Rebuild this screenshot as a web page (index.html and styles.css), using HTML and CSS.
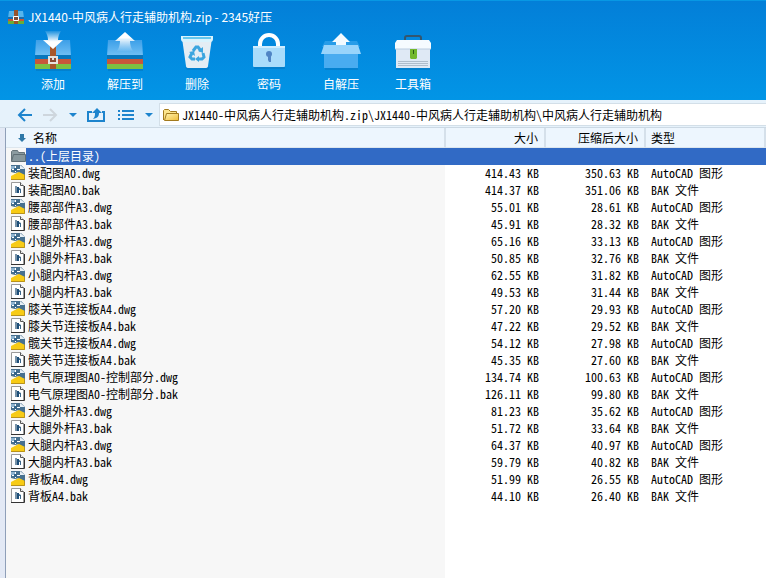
FILE: index.html
```
<!DOCTYPE html>
<html lang="zh-CN">
<head>
    <meta charset="UTF-8">
    <title>JX1440-中风病人行走辅助机构.zip - 2345好压</title>
    <link rel="stylesheet" href="styles.css">
</head>
<body>
    <!-- Shared icons -->
    <svg class="sprite" aria-hidden="true">
        <defs>
            <linearGradient id="box-blue" x1="0" y1="0" x2="0" y2="1">
                <stop offset="0" stop-color="#3c9fe8"/>
                <stop offset="1" stop-color="#72c0f5"/>
            </linearGradient>
            <linearGradient id="arrow-down" x1="0" y1="0" x2="0" y2="1">
                <stop offset="0" stop-color="#fff" stop-opacity="0.1"/>
                <stop offset="0.6" stop-color="#fff"/>
            </linearGradient>
            <linearGradient id="arrow-up" x1="0" y1="0" x2="0" y2="1">
                <stop offset="0.3" stop-color="#fff"/>
                <stop offset="1" stop-color="#fff" stop-opacity="0.05"/>
            </linearGradient>
            <linearGradient id="folder-yellow" x1="0" y1="0" x2="1" y2="1">
                <stop offset="0" stop-color="#fff3b0"/>
                <stop offset="1" stop-color="#f0bd38"/>
            </linearGradient>
        </defs>
        <symbol id="stripes" viewBox="0 0 40 42">
            <path d="M3 39h35v2H3z" fill="#0567a8" opacity="0.35"/>
            <path d="M3 10h34l1 16H2z" fill="url(#box-blue)"/>
            <path d="M2 25h36v4H2z" fill="#0876bd"/>
            <path d="M2 29h36v5H2z" fill="#c8573a"/>
            <path d="M2 34h36v5H2z" fill="#7cc142"/>
        </symbol>
        <symbol id="folder" viewBox="0 0 16 14">
            <path d="M.5 12V2.500l1-1h4l2 2h6v3" fill="#fbe48c" stroke="#a27a1d"/>
            <path d="M3.500 5.500h12v7h-14z" fill="url(#folder-yellow)" stroke="#a27a1d"/>
        </symbol>
        <symbol id="folder-up" viewBox="0 0 16 14">
            <path d="M.5 12V2.500l1-1h5l1 2h6v3" fill="#8b9ba0" stroke="#66757b"/>
            <path d="M2.500 5.500h12v7H.5z" fill="#87979c" stroke="#5f6e74"/>
        </symbol>
        <symbol id="dwg" viewBox="0 0 14 16">
            <path d="M0 0h10l4 4v11H0z" fill="#47708f"/>
            <path d="M0 1h4v3H0z" fill="#8fb4d0"/>
            <path d="M9 0v4h5z" fill="#e8f0f6"/>
            <path d="M4.500 1v6M1 4.500h8" stroke="#fff"/>
            <path d="M3 3h3v3H3z" fill="#34658a"/>
            <path d="M0 7l4 1 4-1-8 5z" fill="#fffbe6"/>
            <path d="M0 11L8 7l6 3v5H0z" fill="#f7cb15"/>
            <path d="M0 14.500h13.500V10" fill="none" stroke="#b8921c"/>
        </symbol>
        <symbol id="bak" viewBox="0 0 14 16">
            <path d="M.5 .5h9l3 3v11H.5z" fill="#fff" stroke="#9a9a9a"/>
            <path d="M9.500 .5v3h3" fill="#eee" stroke="#555"/>
            <path d="M13.500 4v10.500H0" fill="none" stroke="#333"/>
            <path d="M4 4h2v7H4z" fill="#7893a8"/>
            <path d="M6 5h2v6H6z" fill="#1d4e78"/>
            <path d="M8 6l2 1v4H9V8H8z" fill="#3d688b"/>
        </symbol>
    </svg>

    <header class="top">
        <h1 class="title">
            <svg class="logo" viewBox="0 0 16 14" aria-hidden="true">
                <path d="M1 1h14l1 7H0z" fill="#55b5ed"/>
                <path d="M0 7h16v2H0z" fill="#176eb0"/>
                <path d="M0 9h16v2H0z" fill="#c8573a"/>
                <path d="M0 11h16v3H0z" fill="#6aad36"/>
                <path d="M6 0h4v14H6z" fill="#97532c"/>
                <path d="M5.500 6.500h5v4h-5z" fill="#7c4b36" stroke="#fff"/>
            </svg>
            JX1440-中风病人行走辅助机构.zip - 2345好压
        </h1>
        <div class="toolbar">
            <button class="tool">
                <svg viewBox="0 0 40 42" aria-hidden="true">
                    <use href="#stripes"/>
                    <path d="M17 14h6v25h-6z" fill="#a9572b"/>
                    <path d="M16 27h8v6h-8z" fill="#8b4a34" stroke="#e8e2df" stroke-width="2"/>
                    <path d="M20 27v3" stroke="#e8e2df" stroke-width="2"/>
                    <path d="M12 1h16c-2 3-3 6-3 9h5L20 19 10 10h5c0-3-1-6-3-9z" fill="url(#arrow-down)"/>
                </svg>
                添加
            </button>
            <button class="tool">
                <svg viewBox="0 0 40 42" aria-hidden="true">
                    <use href="#stripes"/>
                    <path d="M20 2l10 9h-5c0 4 1 7 3 10H12c2-3 3-6 3-10h-5z" fill="url(#arrow-up)"/>
                </svg>
                解压到
            </button>
            <button class="tool">
                <svg viewBox="0 0 40 42" aria-hidden="true">
                    <path d="M8 37h25l-2 3H10z" fill="#0567a8" opacity="0.3"/>
                    <path d="M5 8h30l-4 28q0 2-3 2H12q-3 0-3-2z" fill="#e4edf4"/>
                    <path d="M4 6h32v3q0 3-3 3H7q-3 0-3-3z" fill="#d9f3fd"/>
                    <path d="M6 7h28v2H6z" fill="#65c8ef"/>
                    <g fill="none" stroke="#3ba5df" stroke-width="3">
                        <path d="M16 21l3-4h2l3 4"/>
                        <path d="M26 23l1 4-2 2h-4"/>
                        <path d="M18 29h-3l-2-2 2-4"/>
                    </g>
                    <path d="M26 17v6l-5-2zM22 26v6l-4-3zM12 22l5-1 1 5z" fill="#3ba5df"/>
                </svg>
                删除
            </button>
            <button class="tool">
                <svg viewBox="0 0 40 42" aria-hidden="true">
                    <path d="M5 37h31v2H5z" fill="#0567a8" opacity="0.35"/>
                    <path d="M11 18v-4a9 9 0 0 1 18 0v4" fill="none" stroke="#fff" stroke-width="4"/>
                    <rect x="4" y="16" width="32" height="21" rx="1" fill="#a9dcfb"/>
                    <path d="M4 16h32v2H4z" fill="#d0edff"/>
                    <circle cx="20" cy="24" r="3" fill="#5085c5"/>
                    <path d="M19 25h3v7h-2l-1-2z" fill="#5085c5"/>
                </svg>
                密码
            </button>
            <button class="tool">
                <svg viewBox="0 0 40 42" aria-hidden="true">
                    <path d="M4 38h33v2H4z" fill="#0567a8" opacity="0.3"/>
                    <path d="M4 11h32l3 6H1z" fill="#279ce8"/>
                    <path d="M20 3l9 9h-4v6H15v-6h-4z" fill="#f2faff"/>
                    <path d="M3 23h34v15H3z" fill="#49acf0"/>
                    <path d="M3 15h34l3 9H0z" fill="#98d4fb"/>
                </svg>
                自解压
            </button>
            <button class="tool">
                <svg viewBox="0 0 40 42" aria-hidden="true">
                    <path d="M3 38h34v2H3z" fill="#0567a8" opacity="0.35"/>
                    <path d="M12 12V8q0-2 2-2h12q2 0 2 2v4" fill="none" stroke="#34566e" stroke-width="2"/>
                    <path d="M3 17h34v21H3z" fill="#dfe9f5"/>
                    <path d="M4 10h32l2 3v6H2v-6z" fill="#f6fbff"/>
                    <path d="M2 19h36" stroke="#bccde0"/>
                    <path d="M5 31.500h30M5 33.500h30M5 35.500h30" stroke="#afbccb"/>
                    <path d="M17 19h7v9l-1 1h-5l-1-1z" fill="#72b82e"/>
                    <path d="M20 20h1v4h-1z" fill="#285915"/>
                </svg>
                工具箱
            </button>
        </div>
    </header>

    <nav class="nav">
        <button class="back" aria-label="后退">
            <svg width="16" height="16" viewBox="0 0 16 16"><path d="M8 2L2 8l6 6M2 8h13" fill="none" stroke="#1d84cd" stroke-width="2"/></svg>
        </button>
        <button class="forward" aria-label="前进">
            <svg width="16" height="16" viewBox="0 0 16 16"><path d="M8 2l6 6-6 6M14 8H1" fill="none" stroke="#ced6dd" stroke-width="2"/></svg>
        </button>
        <button class="drop" aria-label="历史记录">
            <svg width="8" height="16" viewBox="0 0 8 16"><path d="M0 6h8L4 10z" fill="#1d84cd"/></svg>
        </button>
        <button class="up" aria-label="向上">
            <svg width="18" height="16" viewBox="0 0 18 16">
                <path d="M5 5H1v9h16V5h-2" fill="none" stroke="#1d84cd" stroke-width="2"/>
                <path d="M10 1l5 5h-3c0 3-1 5-6 6 2-2 2-4 2-6H5z" fill="#1d84cd"/>
            </svg>
        </button>
        <button class="view" aria-label="视图">
            <svg width="16" height="16" viewBox="0 0 16 16"><path d="M0 4h2M4 4h12M0 8h2M4 8h12M0 12h2M4 12h12" stroke="#1d84cd" stroke-width="2"/></svg>
        </button>
        <button class="drop" aria-label="视图选项">
            <svg width="8" height="16" viewBox="0 0 8 16"><path d="M0 6h8L4 10z" fill="#1d84cd"/></svg>
        </button>
        <label class="address">
            <svg width="16" height="14" aria-hidden="true"><use href="#folder"/></svg>
            <input type="text" aria-label="地址" value="JX1440-中风病人行走辅助机构.zip\JX1440-中风病人行走辅助机构\中风病人行走辅助机构">
        </label>
    </nav>

    <main class="files">
        <table>
            <colgroup>
                <col class="col-name">
                <col class="col-size">
                <col class="col-size">
                <col>
            </colgroup>
            <thead>
                <tr>
                    <th>
                        <span class="sort-head">
                            <svg width="8" height="8" viewBox="0 0 8 8" aria-hidden="true"><path d="M2 0h4v4h2L4 8 0 4h2z" fill="#2f78a8"/></svg>
                            名称
                        </span>
                    </th>
                    <th class="num">大小</th>
                    <th class="num">压缩后大小</th>
                    <th>类型</th>
                </tr>
            </thead>
            <tbody id="file-list">
                <tr class="selected">
                    <td colspan="4"><span class="name"><svg class="file-icon" aria-hidden="true"><use href="#folder-up"/></svg><span>..(上层目录)</span></span></td>
                </tr>
            </tbody>
        </table>
    </main>

    <script>
        const types = { dwg: 'AutoCAD 图形', bak: 'BAK 文件' };

        // name, size, packed size
        const files = [
            ['装配图A0.dwg', '414.43', '350.63'],
            ['装配图A0.bak', '414.37', '351.06'],
            ['腰部部件A3.dwg', '55.01', '28.61'],
            ['腰部部件A3.bak', '45.91', '28.32'],
            ['小腿外杆A3.dwg', '65.16', '33.13'],
            ['小腿外杆A3.bak', '50.85', '32.76'],
            ['小腿内杆A3.dwg', '62.55', '31.82'],
            ['小腿内杆A3.bak', '49.53', '31.44'],
            ['膝关节连接板A4.dwg', '57.20', '29.93'],
            ['膝关节连接板A4.bak', '47.22', '29.52'],
            ['髋关节连接板A4.dwg', '54.12', '27.98'],
            ['髋关节连接板A4.bak', '45.35', '27.60'],
            ['电气原理图A0-控制部分.dwg', '134.74', '100.63'],
            ['电气原理图A0-控制部分.bak', '126.11', '99.80'],
            ['大腿外杆A3.dwg', '81.23', '35.62'],
            ['大腿外杆A3.bak', '51.72', '33.64'],
            ['大腿内杆A3.dwg', '64.37', '40.97'],
            ['大腿内杆A3.bak', '59.79', '40.82'],
            ['背板A4.dwg', '51.99', '26.55'],
            ['背板A4.bak', '44.10', '26.40']
        ];

        const list = document.getElementById('file-list');
        files.forEach(([name, size, packed]) => {
            const ext = name.split('.').pop();
            const row = document.createElement('tr');
            row.innerHTML = `
                <td><span class="name"><svg class="file-icon" aria-hidden="true"><use href="#${ext}"/></svg><span>${name}</span></span></td>
                <td class="num">${size} KB</td>
                <td class="num">${packed} KB</td>
                <td>${types[ext]}</td>`;
            list.appendChild(row);
        });
    </script>
</body>
</html>
```
FILE: styles.css
```
* { box-sizing: border-box; }
body {
    margin: 0;
    min-height: 100vh;
    display: flex;
    flex-direction: column;
    font-family: "Noto Sans CJK SC", sans-serif;
    font-size: 12px;
    color: #000;
}
.sprite { position: absolute; width: 0; height: 0; }
button { padding: 0; border: none; background: none; font: inherit; color: inherit; cursor: pointer; }

/* title and toolbar */
.top {
    height: 100px;
    color: #fff;
    background: linear-gradient(#037fd8, #0295e6);
    border-top: 1px solid #0898e4;
}
.title {
    display: flex;
    align-items: center;
    gap: 4px;
    margin: 0;
    padding: 7px 8px 0;
    height: 24px;
    font-size: 12px;
    font-weight: normal;
}
.logo { width: 16px; height: 14px; }
.toolbar { display: flex; padding: 5px 17px 0; }
.tool {
    display: flex;
    flex-direction: column;
    align-items: center;
    width: 72px;
    gap: 3px;
    line-height: 18px;
}
.tool svg { width: 40px; height: 42px; }

/* navigation bar */
.nav {
    display: flex;
    align-items: center;
    height: 28px;
    padding: 2px 0 0 17px;
    background: #e6f2fb;
    border-bottom: 1px solid #ccd9e4;
}
.nav button { display: flex; }
.forward { margin-left: 9px; }
.drop { margin-left: 11px; }
.up { margin-left: 10px; }
.view { margin-left: 13px; }
.address {
    flex: 1;
    display: flex;
    align-items: center;
    gap: 3px;
    height: 23px;
    margin-left: 6px;
    padding-left: 3px;
    background: #fff;
    border: 1px solid #d3dfe8;
    border-right: none;
}
.address input {
    flex: 1;
    min-width: 0;
    padding: 0;
    border: none;
    outline: none;
    font: inherit;
    font-feature-settings: "hwid";
}

/* file list */
.files {
    flex: 1;
    display: flex;
    align-items: flex-start;
    border-left: 5px solid #e3e9f5;
    background: linear-gradient(#f7f7f7, #f7f7f7) 0 0 / 440px 100% no-repeat #fff;
}
.files::before {
    content: "";
    align-self: stretch;
    width: 1px;
    background: #8f9fb8;
}
table {
    flex: 1;
    table-layout: fixed;
    border-spacing: 0;
    font-feature-settings: "hwid";
}
.col-name { width: 440px; }
.col-size { width: 100px; }
th, td {
    height: 17px;
    padding: 0 5px;
    line-height: 16px;
    font-weight: normal;
    text-align: left;
    white-space: nowrap;
}
td { vertical-align: top; }
th {
    height: 20px;
    background: #edf6fe;
    border-right: 2px solid #d5e0ea;
    border-bottom: 1px solid #dde6ee;
}
th:first-child { padding-left: 12px; }
.sort-head { display: flex; align-items: center; gap: 7px; }
.num { text-align: right; padding-right: 7px; }
th.num { padding-right: 6px; }
.name { display: flex; align-items: center; gap: 3px; height: 16px; }
.file-icon { width: 14px; height: 16px; }
.selected .file-icon { width: 16px; height: 14px; margin-right: -2px; }
.selected td { color: #fff; background: linear-gradient(90deg, #f7f7f7 20px, #316ac5 20px); }
```
